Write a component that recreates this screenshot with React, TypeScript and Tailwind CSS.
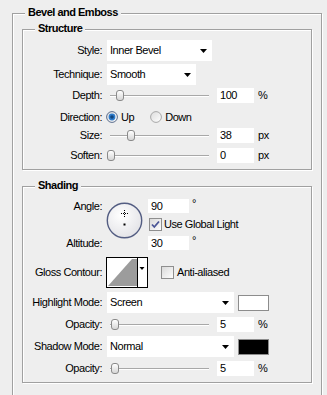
import React from 'react';

/**
 * Bevel and Emboss panel (layer style dialog)
 */

const LABEL = 'w-[79px] shrink-0 text-right whitespace-nowrap';

function GroupBox({
  title,
  className = '',
  children,
}: {
  title: string;
  className?: string;
  children?: React.ReactNode;
}) {
  return (
    <div className={`border border-[#a0a0a0] shadow-[1px_1px_0_#ffffff,inset_1px_1px_0_#ffffff] ${className}`}>
      <div className="-mt-[8px] ml-[12px] w-fit px-[3px] h-[13px] leading-[13px] bg-[#eeeeee] font-bold tracking-[-0.5px]">
        {title}
      </div>
      {children}
    </div>
  );
}

function Arrow() {
  return (
    <svg width="7" height="4" viewBox="0 0 7 4" className="shrink-0">
      <polygon points="0,0 7,0 3.5,4" fill="#000" />
    </svg>
  );
}

function Dropdown({ value, width }: { value: string; width: string }) {
  return (
    <div className={`${width} h-[21px] bg-white flex items-center justify-between pl-[3px] pr-[5px]`}>
      <span>{value}</span>
      <Arrow />
    </div>
  );
}

function NumberBox({ value, width = 'w-[37px]', height = 'h-[15px]' }: { value: string; width?: string; height?: string }) {
  return (
    <div className={`${width} ${height} bg-white flex items-center pl-[3px] shrink-0`}>{value}</div>
  );
}

function Slider({ thumb }: { thumb: number }) {
  return (
    <div className="relative w-[102px] h-[15px] shrink-0">
      <div className="absolute left-[3px] right-0 top-[7px] h-[2px] border-t border-t-[#a8a8a8] border-b border-b-white" />
      <div
        className="absolute top-[2px] w-[8px] h-[11px] rounded-[3px] border border-[#8a8a8a] bg-gradient-to-b from-white to-[#d6d6d6]"
        style={{ left: thumb }}
      />
    </div>
  );
}

function SliderRow({ label, thumb, value, unit }: { label: string; thumb: number; value: string; unit: string }) {
  return (
    <div className="flex items-center h-[15px]">
      <div className={LABEL}>{label}</div>
      <div className="ml-[5px]">
        <Slider thumb={thumb} />
      </div>
      <div className="ml-[8px]">
        <NumberBox value={value} />
      </div>
      <span className="ml-[4px]">{unit}</span>
    </div>
  );
}

function Radio({ checked }: { checked?: boolean }) {
  return (
    <svg width="12" height="12" viewBox="0 0 12 12" className="shrink-0">
      <defs>
        <linearGradient id={checked ? 'rOn' : 'rOff'} x1="0" y1="0" x2="1" y2="1">
          <stop offset="0" stopColor="#dcdcdc" />
          <stop offset="1" stopColor="#ffffff" />
        </linearGradient>
      </defs>
      <circle cx="6" cy="6" r="5.4" fill={`url(#${checked ? 'rOn' : 'rOff'})`} stroke={checked ? '#5a6c8c' : '#a8a8a8'} strokeWidth="1" />
      {checked && (
        <>
          <circle cx="6" cy="6" r="3.4" fill="#2f7ccc" />
          <circle cx="6" cy="6" r="1.8" fill="#13467e" />
        </>
      )}
    </svg>
  );
}

function Checkbox({ checked }: { checked?: boolean }) {
  return (
    <svg width="13" height="13" viewBox="0 0 13 13" className="shrink-0">
      <defs>
        <linearGradient id="cbg" x1="0" y1="0" x2="1" y2="1">
          <stop offset="0" stopColor="#d8d8d8" />
          <stop offset="1" stopColor="#ffffff" />
        </linearGradient>
      </defs>
      <rect x="0.5" y="0.5" width="12" height="12" fill="url(#cbg)" stroke="#8e8e8e" />
      {checked && (
        <path d="M3 6.5 L5.3 9 L10 3.5" fill="none" stroke="#4a5596" strokeWidth="1.8" />
      )}
    </svg>
  );
}

function AngleDial() {
  return (
    <svg width="37" height="37" viewBox="0 0 37 37" className="shrink-0">
      <defs>
        <radialGradient id="dial" cx="0.4" cy="0.35" r="0.7">
          <stop offset="0" stopColor="#ffffff" />
          <stop offset="1" stopColor="#e2e2e6" />
        </radialGradient>
      </defs>
      <circle cx="18.5" cy="18.5" r="17.2" fill="url(#dial)" stroke="#535d82" strokeWidth="1.4" />
      {/* light position crosshair */}
      <g fill="#000">
        <rect x="18" y="8" width="1" height="1" />
        <rect x="18" y="10" width="1" height="1" />
        <rect x="18" y="12" width="1" height="1" />
        <rect x="18" y="14" width="1" height="1" />
        <rect x="15" y="11" width="1" height="1" />
        <rect x="17" y="11" width="1" height="1" />
        <rect x="19" y="11" width="1" height="1" />
        <rect x="21" y="11" width="1" height="1" />
      </g>
      <rect x="17.5" y="21.5" width="2" height="2" fill="#000" />
    </svg>
  );
}

function ContourPicker() {
  return (
    <svg width="42" height="31" viewBox="0 0 42 31" className="shrink-0">
      <rect x="0.5" y="0.5" width="41" height="30" fill="#fff" stroke="#000" />
      <polygon points="2,29 26,2 31,2 31,29" fill="#9c9c9c" />
      <line x1="31.5" y1="0" x2="31.5" y2="31" stroke="#000" />
      <polygon points="33.5,10 38.5,10 36,13" fill="#000" />
    </svg>
  );
}

export default function App() {
  return (
    <div className="w-[327px] h-[395px] overflow-hidden bg-[#eeeeee] text-black text-[11px] tracking-[-0.45px] font-['Liberation_Sans',Arial,sans-serif]">
      <GroupBox title="Bevel and Emboss" className="ml-[12px] mt-[13px] w-[310px] h-[420px]">
        {/* Structure */}
        <GroupBox title="Structure" className="ml-[9px] mt-[10px] w-[290px] pb-[6px]">
          <div className="flex items-center h-[21px] mt-[5px]">
            <div className={LABEL}>Style:</div>
            <div className="ml-[5px]">
              <Dropdown value="Inner Bevel" width="w-[105px]" />
            </div>
          </div>
          <div className="flex items-center h-[21px] mt-[3px]">
            <div className={LABEL}>Technique:</div>
            <div className="ml-[5px]">
              <Dropdown value="Smooth" width="w-[89px]" />
            </div>
          </div>
          <div className="mt-[3px]">
            <SliderRow label="Depth:" thumb={9} value="100" unit="%" />
          </div>
          <div className="flex items-center h-[14px] mt-[7px]">
            <div className={LABEL}>Direction:</div>
            <div className="ml-[4px] flex items-center gap-[3px]">
              <Radio checked />
              <span>Up</span>
            </div>
            <div className="ml-[16px] flex items-center gap-[3px]">
              <Radio />
              <span>Down</span>
            </div>
          </div>
          <div className="mt-[4px]">
            <SliderRow label="Size:" thumb={20} value="38" unit="px" />
          </div>
          <div className="mt-[5px]">
            <SliderRow label="Soften:" thumb={0} value="0" unit="px" />
          </div>
        </GroupBox>

        {/* Shading */}
        <GroupBox title="Shading" className="ml-[9px] mt-[16px] w-[290px] pb-[6px]">
          <div className="flex mt-[7px] h-[51px]">
            <div className={`${LABEL} flex flex-col justify-between`}>
              <div className="h-[14px] leading-[14px]">Angle:</div>
              <div className="h-[14px] leading-[14px]">Altitude:</div>
            </div>
            <div className="ml-[4px] mt-[3px]">
              <AngleDial />
            </div>
            <div className="ml-[5px] flex flex-col">
              <div className="flex items-start h-[14px]">
                <NumberBox value="90" width="w-[41px]" height="h-[14px]" />
                <span className="ml-[3px] -mt-[1px] leading-[11px]">°</span>
              </div>
              <div className="flex items-center h-[13px] mt-[5px] ml-[1px] gap-[2px]">
                <Checkbox checked />
                <span>Use Global Light</span>
              </div>
              <div className="flex items-start h-[14px] mt-[5px]">
                <NumberBox value="30" width="w-[41px]" height="h-[14px]" />
                <span className="ml-[3px] -mt-[1px] leading-[11px]">°</span>
              </div>
            </div>
          </div>

          <div className="flex items-center h-[31px] mt-[7px]">
            <div className={LABEL}>Gloss Contour:</div>
            <div className="ml-[4px]">
              <ContourPicker />
            </div>
            <div className="ml-[13px] flex items-center gap-[3px]">
              <Checkbox />
              <span>Anti-aliased</span>
            </div>
          </div>

          <div className="flex items-center h-[21px] mt-[4px]">
            <div className={LABEL}>Highlight Mode:</div>
            <div className="ml-[5px]">
              <Dropdown value="Screen" width="w-[127px]" />
            </div>
            <div className="ml-[4px] w-[31px] h-[16px] bg-white border border-[#8c8c8c]" />
          </div>
          <div className="mt-[4px]">
            <SliderRow label="Opacity:" thumb={4} value="5" unit="%" />
          </div>
          <div className="flex items-center h-[21px] mt-[4px]">
            <div className={LABEL}>Shadow Mode:</div>
            <div className="ml-[5px]">
              <Dropdown value="Normal" width="w-[127px]" />
            </div>
            <div className="ml-[4px] w-[31px] h-[16px] bg-black border border-[#8c8c8c]" />
          </div>
          <div className="mt-[4px]">
            <SliderRow label="Opacity:" thumb={4} value="5" unit="%" />
          </div>
        </GroupBox>
      </GroupBox>
    </div>
  );
}
